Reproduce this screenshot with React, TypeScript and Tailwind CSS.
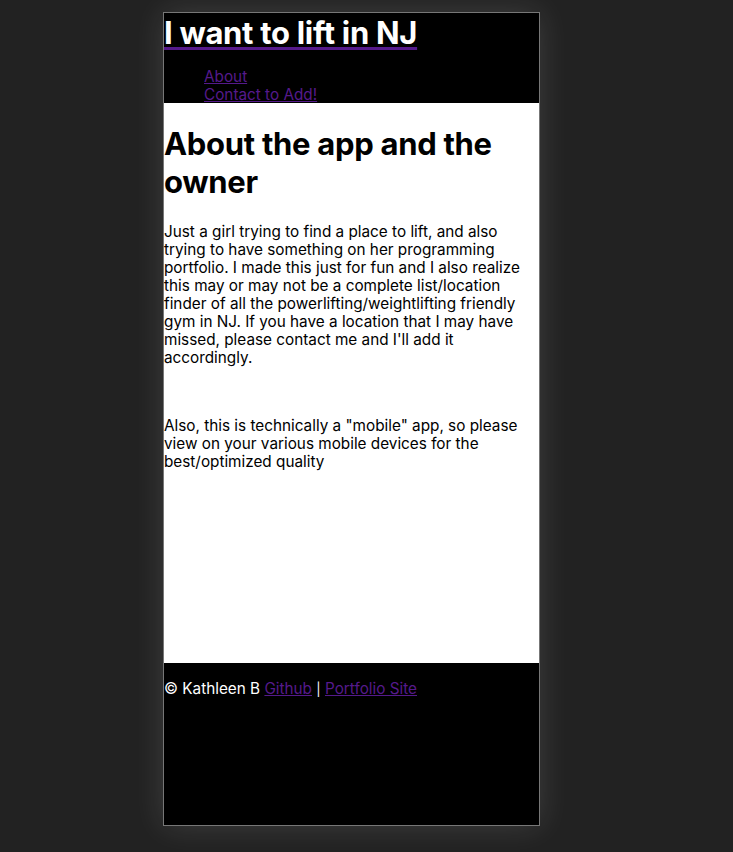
import React from "react";

export default function App() {
  const body = { fontFamily: "Inter, 'Liberation Sans', sans-serif" };
  const head = { fontFamily: "Inter, 'Liberation Sans', sans-serif" };
  return (
    <div className="min-h-[852px] w-full bg-[#222222] flex justify-center pt-[12px] pr-[30px]">
      <div className="w-[377px] h-[814px] border border-[#777777] shadow-[0_0_30px_rgba(255,255,255,0.13)] flex flex-col bg-black">
        <header className="bg-black h-[90px] pt-[1px]">
          <a href="#" className="underline decoration-[#551a8b] decoration-[3px] underline-offset-[3px]">
            <h1 className="inline text-white text-[31px] font-bold leading-[38px] tracking-[-0.3px]" style={head}>
              I want to lift in NJ
            </h1>
          </a>
          <ul className="mt-[16px] pl-[40px] text-[15.3px] leading-[18px]" style={body}>
            <li><a href="#" className="text-[#551a8b] underline">About</a></li>
            <li><a href="#" className="text-[#551a8b] underline">Contact to Add!</a></li>
          </ul>
        </header>
        <main className="bg-white h-[560px] flex flex-col text-black">
          <h2 className="mt-[22px] text-[31px] font-bold leading-[38px] tracking-[-0.3px]" style={head}>
            About the app and the owner
          </h2>
          <p className="mt-[22px] text-[15.3px] leading-[18px]" style={body}>
            Just a girl trying to find a place to lift, and also trying to have something on her programming portfolio. I made this just for fun and I also realize this may or may not be a complete list/location finder of all the powerlifting/weightlifting friendly gym in NJ. If you have a location that I may have missed, please contact me and I'll add it accordingly.
          </p>
          <p className="mt-[50px] text-[15.3px] leading-[18px]" style={body}>
            Also, this is technically a "mobile" app, so please view on your various mobile devices for the best/optimized quality
          </p>
        </main>
        <footer className="bg-black flex-1 pt-[17px] text-white text-[15.3px] leading-[18px]" style={body}>
          <p>
            © Kathleen B <a href="#" className="text-[#551a8b] underline">Github</a> <span className="text-[13px]">|</span> <a href="#" className="text-[#551a8b] underline">Portfolio Site</a>
          </p>
        </footer>
      </div>
    </div>
  );
}
